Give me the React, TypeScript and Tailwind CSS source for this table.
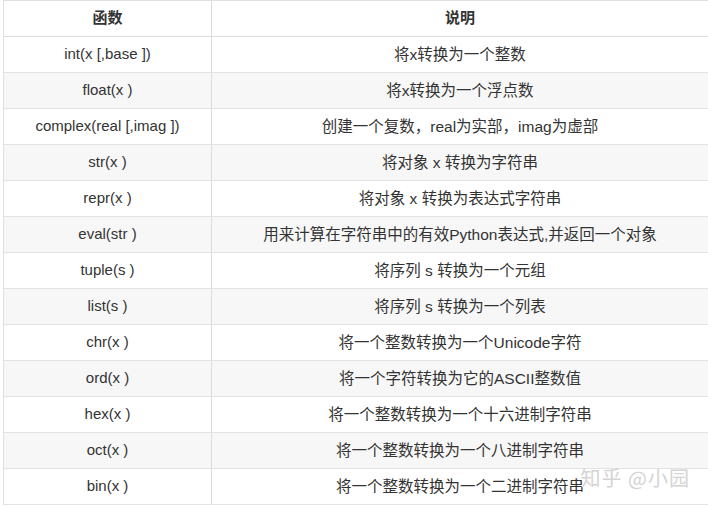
const rows: [string, string][] = [
  ['int(x [,base ])', '将x转换为一个整数'],
  ['float(x )', '将x转换为一个浮点数'],
  ['complex(real [,imag ])', '创建一个复数，real为实部，imag为虚部'],
  ['str(x )', '将对象 x 转换为字符串'],
  ['repr(x )', '将对象 x 转换为表达式字符串'],
  ['eval(str )', '用来计算在字符串中的有效Python表达式,并返回一个对象'],
  ['tuple(s )', '将序列 s 转换为一个元组'],
  ['list(s )', '将序列 s 转换为一个列表'],
  ['chr(x )', '将一个整数转换为一个Unicode字符'],
  ['ord(x )', '将一个字符转换为它的ASCII整数值'],
  ['hex(x )', '将一个整数转换为一个十六进制字符串'],
  ['oct(x )', '将一个整数转换为一个八进制字符串'],
  ['bin(x )', '将一个整数转换为一个二进制字符串'],
]

export default function App() {
  return (
    <div className="relative h-[507px] w-[708px] overflow-hidden bg-white pl-[3px] [font-family:'Liberation_Sans','Noto_Sans_CJK_SC',sans-serif] text-[#333]">
      <div className="border-t border-l border-[#e0e0e0]">
        <div className="grid h-[36px] grid-cols-[208px_1fr] border-b border-[#dcdcdc] text-[15px] font-bold">
          <div className="flex items-center justify-center border-r border-[#dcdcdc]">函数</div>
          <div className="flex items-center justify-center">说明</div>
        </div>
        {rows.map(([fn, desc], i) => (
          <div
            className={`grid h-[36px] grid-cols-[208px_1fr] border-b border-[#e3e3e3] ${i % 2 === 1 ? 'bg-[#f7f7f7]' : 'bg-white'}`}
            key={fn}
          >
            <div className="flex items-center justify-center border-r border-[#dcdcdc] text-[15px]">{fn}</div>
            <div className="flex items-center justify-center text-[15.5px]">{desc}</div>
          </div>
        ))}
      </div>
      <div className="absolute right-[18px] bottom-[14px] text-[20px] tracking-[1px] text-[#d4d4d4] [font-family:'Noto_Sans_CJK_SC',sans-serif]">
        知乎 @小园
      </div>
    </div>
  )
}
